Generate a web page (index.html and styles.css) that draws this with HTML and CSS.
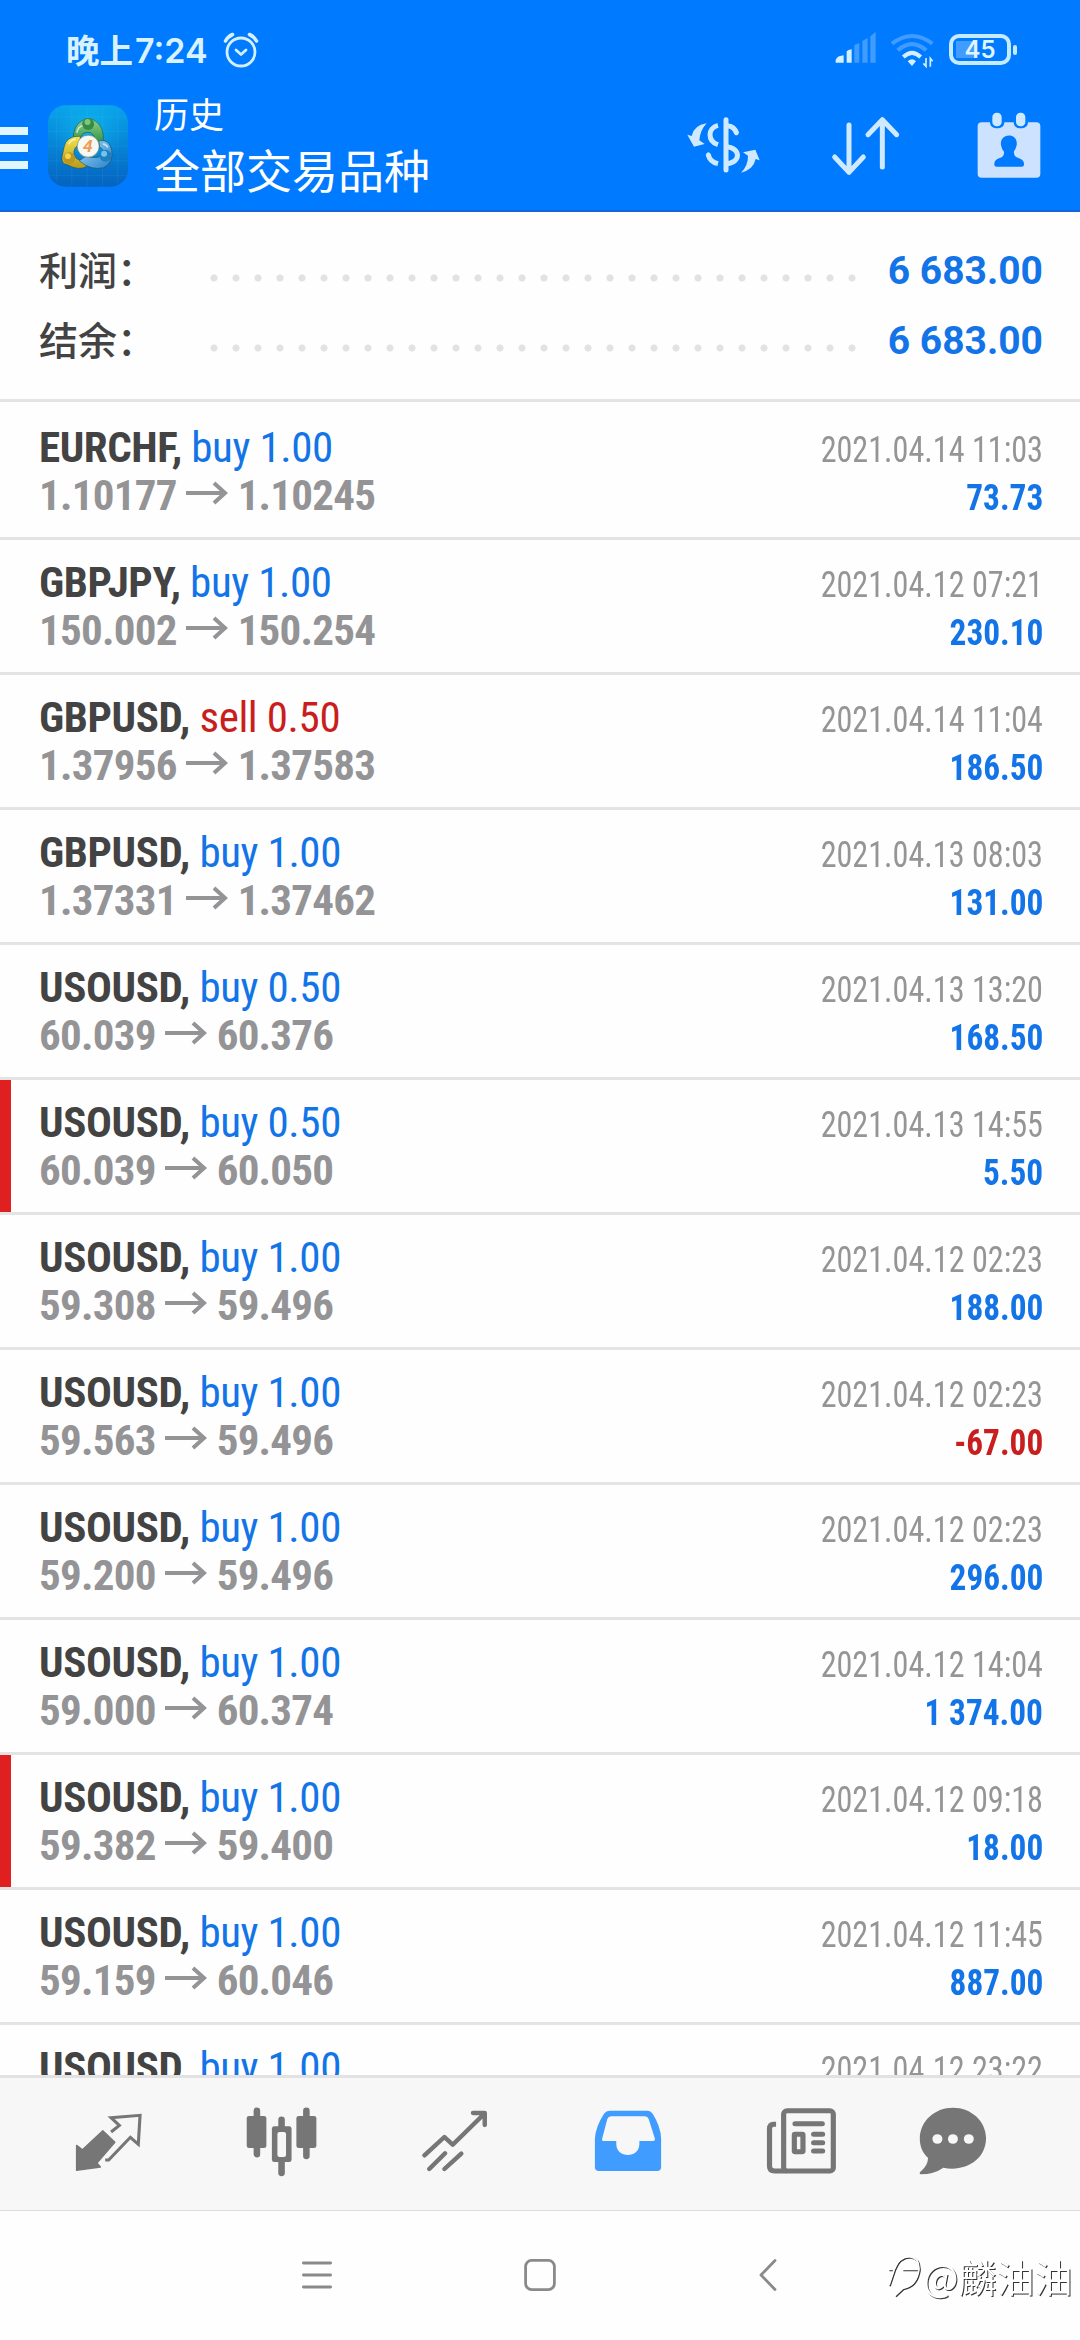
FILE: index.html
```html
<!DOCTYPE html>
<html lang="zh-CN">
<head>
<meta charset="utf-8">
<title>历史</title>
<link rel="stylesheet" href="styles.css">
</head>
<body>
<svg class="defs" width="0" height="0">
  <symbol id="arrow" viewBox="0 0 42 24"><path d="M0 12H39M28 2L39 12L28 22" fill="none" stroke="#949496" stroke-width="4"/></symbol>
</svg>
<div class="screen">
  <header class="header">
    <div class="status">
      <span class="clock">晚上<span class="digits">7:24</span></span>
      <svg class="alarm" width="36" height="36" viewBox="0 0 36 36" fill="none" stroke="#d2f0ff" stroke-linecap="round">
        <circle cx="18" cy="20" r="14" stroke-width="2.8"/><path d="M13 18l5 4.500 5-4.500" stroke-width="2.800" stroke-linejoin="round"/><path d="M2.500 9Q5 4.500 9.500 2.500M33.500 9Q31 4.500 26.500 2.500" stroke-width="3.600"/>
      </svg>
      <svg class="signal" width="41" height="32" viewBox="40 22 123 96">
        <path fill="#d2f0ff" d="M42 114v-8q3-8 10-11l14-3v22zM75 114V80q4-4 15-6v40z"/>
        <path fill="#409cff" d="M98 114V61l15-6v59zM122 114V49l16-9v74zM146 114V35l16-13v92z"/>
      </svg>
      <svg class="wifi" width="44" height="36" viewBox="207 20 132 108" fill="none" stroke-linecap="butt">
        <path d="M213 55Q273 9 334 55" stroke="#409cff" stroke-width="12"/>
        <path d="M230 75Q273 38 316 75" stroke="#409cff" stroke-width="12"/>
        <path d="M247 95Q273 70 299 95" stroke="#d2f0ff" stroke-width="12"/>
        <path d="M260 108q13-12 25 0l-12 14z" fill="#d2f0ff"/>
        <path d="M315 98v25l-8-9M328 124V99l7 9" stroke="#d2f0ff" stroke-width="5"/>
      </svg>
      <div class="battery"><span class="level">45</span></div>
    </div>
    <div class="toolbar">
      <div class="burger"><i></i><i></i><i></i></div>
      <svg class="logo" width="80" height="82" viewBox="24 15 241 245">
        <defs>
          <linearGradient id="bg" x1="0" y1="0" x2="0" y2="1"><stop offset="0" stop-color="#08a4ea"/><stop offset="1" stop-color="#0563c0"/></linearGradient>
          <radialGradient id="glow"><stop offset="0" stop-color="#10c0ee" stop-opacity=".7"/><stop offset="1" stop-color="#10b0ee" stop-opacity="0"/></radialGradient>
          <linearGradient id="gr" x1="0" y1="0" x2="0" y2="1"><stop offset="0" stop-color="#8ed488"/><stop offset="1" stop-color="#2f9047"/></linearGradient>
          <linearGradient id="ye" x1="0" y1="0" x2="0" y2="1"><stop offset="0" stop-color="#f3e34c"/><stop offset="1" stop-color="#b99a1d"/></linearGradient>
          <linearGradient id="bl" x1="0" y1="0" x2="1" y2="1"><stop offset="0" stop-color="#a5dcf7"/><stop offset="1" stop-color="#2480cb"/></linearGradient>
        </defs>
        <rect x="24" y="15" width="241" height="245" rx="52" fill="url(#bg)"/>
        <circle cx="145" cy="90" r="110" fill="url(#glow)"/>
        <path d="M50 30v215M96 17v241M142 16v243M188 17v241M234 27v222M26 50h237M25 94h239M25 138h239M25 182h239M28 226h233" stroke="#7fd8ff" stroke-opacity=".14" stroke-width="2"/>
        <g stroke="#174e5e" stroke-opacity=".6" stroke-width="3">
          <path d="M101 123Q96 76 129 60Q145 50 163 60Q196 78 190 128L168 130Q164 94 142 96Q122 98 121 120Z" fill="url(#gr)"/>
          <path d="M121 108Q78 106 72 143L66 172Q64 192 82 194Q118 214 143 198L131 178Q110 184 102 164Q99 140 122 132Z" fill="url(#ye)"/>
          <path d="M177 122Q210 114 216 151Q222 187 192 203Q152 212 118 182L139 168Q178 180 191 160Q192 145 180 142Z" fill="url(#bl)"/>
        </g>
        <path d="M111 98q2-18 19-23M86 132q8-14 21-15M204 142q-4-9-14-11" fill="none" stroke="#fff" stroke-opacity=".65" stroke-width="5"/>
        <circle cx="145" cy="71" r="18" fill="#368c46"/><circle cx="143" cy="65" r="9" fill="#7ec67d"/>
        <circle cx="88" cy="174" r="18" fill="#bd981e"/><circle cx="84" cy="168" r="9" fill="#f1d54f"/>
        <circle cx="197" cy="167" r="18" fill="#207fbd"/><circle cx="193" cy="161" r="9" fill="#72c4ef"/>
        <circle cx="145" cy="138" r="33" fill="#f7f7f3" stroke="#6d8b69" stroke-width="2"/>
        <text x="144" y="157" text-anchor="middle" class="logo-digit">4</text>
      </svg>
      <div class="titles"><div class="sub">历史</div><div class="main">全部交易品种</div></div>
      <svg class="tool dollar" width="76" height="60" viewBox="14 29 228 180">
        <g fill="none" stroke="#cfe9ff" stroke-width="15">
          <path d="M134 43V194" stroke-linecap="round"/>
          <path d="M110 60C78 68 78 107 110 118M110 175Q85 169 81 148M135 62Q158 60 166 84" stroke-linecap="butt"/>
          <path d="M165 82l.1.1M81 149l.1.1" stroke-linecap="round"/>
          <path d="M135 124C181 128 178 174 135 175"/>
        </g>
        <path fill="#cfe9ff" d="M76 54Q37 60 31 92L18 88L38 124L70 116L54 105Q56 75 76 54ZM179 202Q216 193 223 161L235 165L222 133L185 141L200 151Q201 179 179 202Z"/>
      </svg>
      <svg class="tool sort" width="72" height="62" viewBox="448 29 216 186" fill="none" stroke="#cfe9ff" stroke-width="15" stroke-linecap="round" stroke-linejoin="round">
        <path d="M505 59V201M462 155l43 46 43-46M605 185V43M562 88l43-45 43 45"/>
      </svg>
      <svg class="tool calendar" width="64" height="66" viewBox="888 20 192 198">
        <rect x="890" y="51" width="188" height="166" rx="12" fill="#cce2ff"/>
        <rect x="927" y="20" width="43" height="49" rx="18" fill="#007aff"/><rect x="998" y="20" width="43" height="49" rx="18" fill="#007aff"/>
        <rect x="934" y="22" width="28" height="41" rx="13" fill="#cce9ff"/><rect x="1005" y="22" width="28" height="41" rx="13" fill="#cce9ff"/>
        <path fill="#007aff" d="M960 120C955 81 1013 81 1007 120Q1004 132 999 138Q997 154 1014 159Q1030 164 1029 178Q1029 184 1022 184H947Q940 184 940 178Q939 164 954 159Q971 154 969 139Q962 132 960 120Z"/>
      </svg>
    </div>
  </header>

  <section class="summary">
    <div class="sum"><span class="label">利润：</span><span class="dots"></span><span class="total">6 683.00</span></div>
    <div class="sum"><span class="label">结余：</span><span class="dots"></span><span class="total">6 683.00</span></div>
  </section>

  <main class="list">
    <div class="row"><div class="line"><span class="deal"><b class="sym">EURCHF,</b> <span class="buy">buy 1.00</span></span><span class="date">2021.04.14 11:03</span></div><div class="line"><span class="price">1.10177<svg class="arrow"><use href="#arrow"/></svg>1.10245</span><span class="gain">73.73</span></div></div>
    <div class="row"><div class="line"><span class="deal"><b class="sym">GBPJPY,</b> <span class="buy">buy 1.00</span></span><span class="date">2021.04.12 07:21</span></div><div class="line"><span class="price">150.002<svg class="arrow"><use href="#arrow"/></svg>150.254</span><span class="gain">230.10</span></div></div>
    <div class="row"><div class="line"><span class="deal"><b class="sym">GBPUSD,</b> <span class="sell">sell 0.50</span></span><span class="date">2021.04.14 11:04</span></div><div class="line"><span class="price">1.37956<svg class="arrow"><use href="#arrow"/></svg>1.37583</span><span class="gain">186.50</span></div></div>
    <div class="row"><div class="line"><span class="deal"><b class="sym">GBPUSD,</b> <span class="buy">buy 1.00</span></span><span class="date">2021.04.13 08:03</span></div><div class="line"><span class="price">1.37331<svg class="arrow"><use href="#arrow"/></svg>1.37462</span><span class="gain">131.00</span></div></div>
    <div class="row"><div class="line"><span class="deal"><b class="sym">USOUSD,</b> <span class="buy">buy 0.50</span></span><span class="date">2021.04.13 13:20</span></div><div class="line"><span class="price">60.039<svg class="arrow"><use href="#arrow"/></svg>60.376</span><span class="gain">168.50</span></div></div>
    <div class="row marked"><div class="line"><span class="deal"><b class="sym">USOUSD,</b> <span class="buy">buy 0.50</span></span><span class="date">2021.04.13 14:55</span></div><div class="line"><span class="price">60.039<svg class="arrow"><use href="#arrow"/></svg>60.050</span><span class="gain">5.50</span></div></div>
    <div class="row"><div class="line"><span class="deal"><b class="sym">USOUSD,</b> <span class="buy">buy 1.00</span></span><span class="date">2021.04.12 02:23</span></div><div class="line"><span class="price">59.308<svg class="arrow"><use href="#arrow"/></svg>59.496</span><span class="gain">188.00</span></div></div>
    <div class="row"><div class="line"><span class="deal"><b class="sym">USOUSD,</b> <span class="buy">buy 1.00</span></span><span class="date">2021.04.12 02:23</span></div><div class="line"><span class="price">59.563<svg class="arrow"><use href="#arrow"/></svg>59.496</span><span class="gain loss">-67.00</span></div></div>
    <div class="row"><div class="line"><span class="deal"><b class="sym">USOUSD,</b> <span class="buy">buy 1.00</span></span><span class="date">2021.04.12 02:23</span></div><div class="line"><span class="price">59.200<svg class="arrow"><use href="#arrow"/></svg>59.496</span><span class="gain">296.00</span></div></div>
    <div class="row"><div class="line"><span class="deal"><b class="sym">USOUSD,</b> <span class="buy">buy 1.00</span></span><span class="date">2021.04.12 14:04</span></div><div class="line"><span class="price">59.000<svg class="arrow"><use href="#arrow"/></svg>60.374</span><span class="gain">1 374.00</span></div></div>
    <div class="row marked"><div class="line"><span class="deal"><b class="sym">USOUSD,</b> <span class="buy">buy 1.00</span></span><span class="date">2021.04.12 09:18</span></div><div class="line"><span class="price">59.382<svg class="arrow"><use href="#arrow"/></svg>59.400</span><span class="gain">18.00</span></div></div>
    <div class="row"><div class="line"><span class="deal"><b class="sym">USOUSD,</b> <span class="buy">buy 1.00</span></span><span class="date">2021.04.12 11:45</span></div><div class="line"><span class="price">59.159<svg class="arrow"><use href="#arrow"/></svg>60.046</span><span class="gain">887.00</span></div></div>
    <div class="row"><div class="line"><span class="deal"><b class="sym">USOUSD,</b> <span class="buy">buy 1.00</span></span><span class="date">2021.04.12 23:22</span></div></div>
  </main>

  <nav class="tabs">
    <svg viewBox="199 276 232 240" preserveAspectRatio="none">
      <path fill="#767676" stroke="#767676" stroke-width="4" stroke-linejoin="round" d="M297 362L332 397L280 459L290 471L221 481V406L238 419Z"/>
      <path fill="none" stroke="#767676" stroke-width="9" d="M321 366L345 346L321 323L405 316L400 403L377 382L314 450H304"/>
    </svg>
    <svg viewBox="701.300 276 232 240" preserveAspectRatio="none">
      <path d="M744.500 302V433M888 302V438M816 329V489" stroke="#767676" stroke-width="19" stroke-linecap="round"/>
      <rect x="715" y="318" width="57" height="96" rx="7" fill="#767676"/><rect x="859" y="318" width="58" height="96" rx="7" fill="#767676"/>
      <rect x="788" y="349" width="57" height="107" rx="7" fill="#767676"/><rect x="804" y="366" width="25" height="75" rx="6" fill="#f7f7f7"/>
    </svg>
    <svg viewBox="1203.700 276 232 240" preserveAspectRatio="none" fill="none" stroke="#767676" stroke-width="13" stroke-linecap="round" stroke-linejoin="round">
      <path d="M1231 436L1289 381L1313 404L1404 312M1372 309H1406V345M1245 477L1291 430M1289 477L1338 431" stroke-linecap="round"/>
    </svg>
    <svg viewBox="138 276 232 240" preserveAspectRatio="none">
      <path fill="#409cff" d="M203 302H309Q320 302 326 312Q349 350 350 386V471Q350 483 338 483H170Q158 483 158 471V386Q160 350 184 312Q190 302 203 302Z"/>
      <path fill="#f7f7f7" d="M205 319H303Q311 319 314 327L332 386Q333 393 327 393H287V402C287 446 220 446 220 402V393H182Q177 393 179 386L194 327Q197 319 205 319Z"/>
    </svg>
    <svg viewBox="640.300 276 232 240" preserveAspectRatio="none" fill="none" stroke="#767676" stroke-width="15">
      <rect x="706" y="302" width="144" height="181" rx="10"/>
      <path d="M684 343H677Q665 344 665 356V469Q665 483 680 483H715"/>
      <path d="M739 341H818M793 373H819M793 398H819M793 423H819" stroke-linecap="round"/>
      <rect x="737" y="373" width="25" height="52" rx="2"/>
    </svg>
    <svg class="chat" viewBox="1083.200 276 232 240" preserveAspectRatio="none">
      <path fill="#767676" d="M1199 293C1252 293 1295 333 1295 385C1295 449 1234 487 1171 473Q1146 492 1105 493Q1099 490 1107 483Q1126 466 1127 444C1109 427 1103 406 1103 387C1103 333 1146 293 1199 293Z"/>
      <circle cx="1154" cy="387" r="14.500" fill="#f7f7f7"/><circle cx="1199" cy="387" r="14.500" fill="#f7f7f7"/><circle cx="1245" cy="387" r="14.500" fill="#f7f7f7"/>
    </svg>
  </nav>

  <div class="sysnav">
    <svg width="30" height="34" viewBox="0 0 30 34" stroke="#8a8a8a" stroke-width="2.800" stroke-linecap="round"><path d="M1.400 5H28.600M1.400 17H28.600M1.400 29H28.600"/></svg>
    <svg width="32" height="34" viewBox="0 0 32 34" fill="none" stroke="#8a8a8a" stroke-width="2.800"><rect x="1.600" y="2.400" width="28.800" height="29.200" rx="6"/></svg>
    <svg width="18" height="34" viewBox="0 0 18 34" fill="none" stroke="#8a8a8a" stroke-width="2.800" stroke-linecap="round" stroke-linejoin="round"><path d="M16 2.500L2 17L16 31.500"/></svg>
    <div class="watermark">
      <svg width="36" height="44" viewBox="20 34 108 132" fill="none" stroke="#fff" stroke-width="5"><path d="M26 128L42 80H24M42 80Q56 42 88 42Q117 46 116 80Q109 130 67 137L44 159M66 80H116"/></svg>
      <span>@麟油油</span>
    </div>
  </div>
</div>
</body>
</html>
```
FILE: styles.css
```css
* { box-sizing: border-box; }
body { margin: 0; background: #fefefe; }
svg { display: block; flex: none; }
.defs { position: absolute; }
.screen {
  width: 1080px; height: 2340px; overflow: hidden;
  display: flex; flex-direction: column;
  font-family: "Roboto Condensed", Roboto, "Noto Sans CJK SC", sans-serif;
}

/* Header */
.header { height: 212px; flex: none; background: #007aff; border-bottom: 2px solid #1565d8; color: #fff; }
.status { height: 100px; display: flex; align-items: center; padding: 0 63px 0 66px; }
.clock { font: 700 33.500px/40px "Noto Sans CJK SC", sans-serif; color: #d8f3ff; width: 157px; white-space: nowrap; }
.digits { font-size: 34px; font-weight: 600; font-family: Inter, sans-serif; margin-left: 2px; }
.signal { margin-left: auto; margin-right: 14px; margin-top: -4px; }
.wifi { margin-right: 15px; }
.battery {
  width: 62px; height: 31px; margin-right: 6px; margin-top: -2px; border: 4px solid #c6eaff; border-radius: 10px;
  background: linear-gradient(90deg, #409cff 20px, transparent 0) 3px 3px / 48px 17px no-repeat;
  display: flex; justify-content: center; position: relative;
}
.battery::after { content: ""; position: absolute; right: -10px; top: 7px; width: 4px; height: 10px; border-radius: 2px; background: #c6eaff; }
.level { font: 600 24px/24px Inter, sans-serif; color: #e0f6ff; }
.toolbar { height: 110px; display: flex; align-items: flex-start; padding-right: 39px; }
.burger { width: 28px; margin: 27px 20px 0 0; display: grid; gap: 9px; }
.burger i { height: 8px; background: #e2f6ff; }
.logo { margin-top: 5px; }
.logo-digit { font: italic 700 52px Roboto, sans-serif; fill: #ef9c54; }
.titles { margin-left: 26px; font-family: "Noto Sans CJK SC", sans-serif; font-weight: 400; margin-right: auto; white-space: nowrap; }
.sub { font-size: 35px; line-height: 40px; margin-top: -7px; }
.main { font-size: 46px; line-height: 56px; margin-top: 7px; }
.dollar { margin: 15px 68px 0 0; }
.sort { margin: 15px 75px 0 0; }
.calendar { margin: 12px 0 0 0; }

/* Account totals */
.summary { height: 190px; flex: none; border-bottom: 3px solid #e4e4e4; padding: 24px 37px 0 39px; }
.sum { height: 70px; display: flex; align-items: center; }
.label { font: 500 39px/70px "Noto Sans CJK SC", sans-serif; color: #434343; width: 168px; margin-top: -6px; }
.dots { width: 660px; height: 70px; background: radial-gradient(circle at 7px 42px, #e2e2e2 3.200px, transparent 3.900px) 0 0 / 22px 70px; }
.total { margin-left: auto; font: 700 39px/70px Roboto, sans-serif; color: #1374e8; }

/* Deals */
.list { height: 1673px; flex: none; overflow: hidden; padding-top: 3px; }
.row { height: 135px; border-bottom: 3px solid #e4e4e4; padding: 18px 37px 0 39px; }
.row.marked { background: linear-gradient(#e02020, #e02020) 0 0 / 11px 132px no-repeat; }
.line { height: 48px; line-height: 48px; display: flex; justify-content: space-between; align-items: baseline; font-size: 43px; white-space: nowrap; }
.deal { letter-spacing: -.4px; }
.sym { color: #434343; }
.buy { color: #1374e8; }
.sell { color: #c91e1e; }
.price { color: #949496; font-weight: 700; display: flex; align-items: baseline; letter-spacing: -.75px; }
.arrow { width: 42px; height: 24px; margin: 0 9.500px; transform: translateY(-5px); }
.date { font-size: 36px; color: #959595; transform: scaleX(.893); transform-origin: right; }
.gain { font-size: 36px; font-weight: 700; color: #1374e8; transform: scaleX(.925); transform-origin: right; }
.gain.loss { color: #c91e1e; }

/* Tabs */
.tabs { height: 136px; flex: none; background: #f7f7f7; border-top: 3px solid #e2e2e2; border-bottom: 1px solid #dcdcdc; display: flex; gap: 93px; padding: 24px 0 0 68.500px; }
.tabs svg { width: 80px; height: 80px; }
.tabs .chat { margin-left: -20.500px; }

/* System navigation */
.sysnav { flex: 1; position: relative; display: flex; align-items: flex-start; padding: 47px 0 0 302px; }
.sysnav > svg + svg { margin-left: 192px; }
.sysnav > svg + svg + svg { margin-left: 202.500px; }
.watermark { position: absolute; left: 887px; top: 37px; display: flex; align-items: center; filter: drop-shadow(1px 1px .3px #333); color: #fff; font: 350 38px/56px "Noto Sans CJK SC", sans-serif; white-space: nowrap; }
```
